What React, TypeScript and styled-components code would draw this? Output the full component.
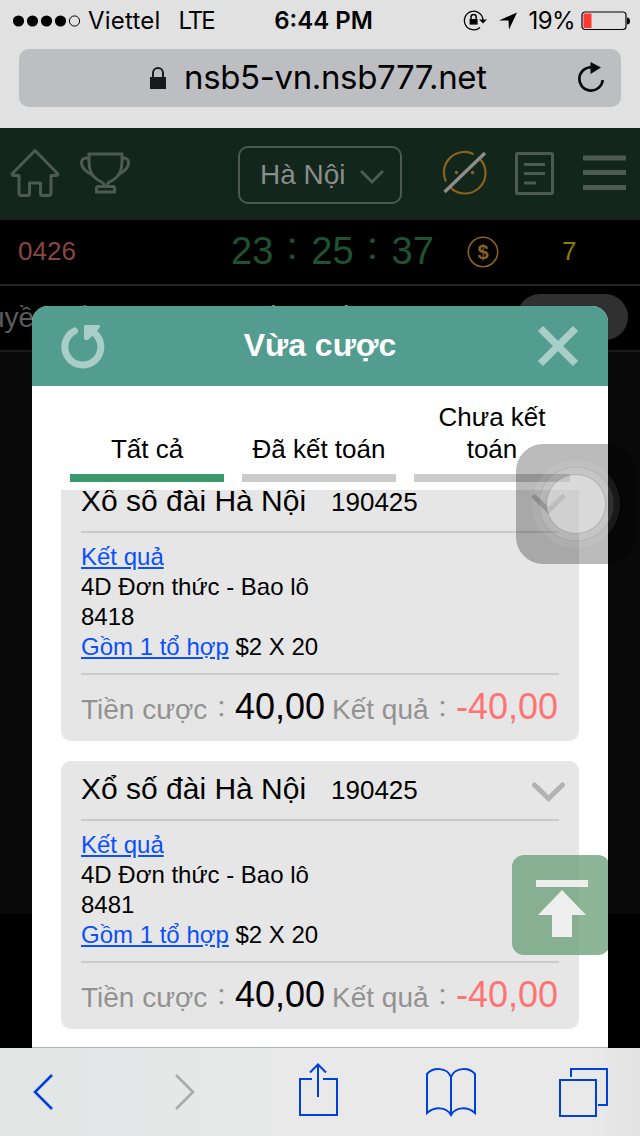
import React from 'react';
import styled, { createGlobalStyle } from 'styled-components';

const GlobalStyle = createGlobalStyle`
  * { box-sizing: border-box; }
  body { margin: 0; background: #000; font-family: "Liberation Sans", "Noto Sans CJK JP", sans-serif; }
`;

const Screen = styled.div`
  position: relative;
  width: 640px;
  height: 1136px;
  overflow: hidden;
  display: flex;
  flex-direction: column;
  background: #000;
`;

/* Browser chrome */
const Chrome = styled.header`
  height: 128px;
  flex: none;
  background: #e1e1e1;
  font-family: Inter, "Liberation Sans", sans-serif;
  color: #030303;
`;
const StatusBar = styled.div`
  height: 40px;
  display: grid;
  grid-template-columns: 1fr 100px 1fr;
  align-items: center;
  padding: 1px 10px 0 13px;
  font-size: 24px;
  line-height: 40px;
  white-space: nowrap;
`;
const Carrier = styled.div`
  display: flex;
  align-items: center;
`;
const Signal = styled.svg`
  margin-right: 7px;
`;
const StatusText = styled.span<{ $spacing: number; $gap?: number }>`
  letter-spacing: ${p => p.$spacing}px;
  margin-left: ${p => p.$gap || 0}px;
`;
const Clock = styled.div`
  font-weight: 600;
  padding-left: 4px;
  display: flex;
  justify-content: center;
`;
const StatusIcons = styled.div`
  display: flex;
  align-items: center;
  justify-content: flex-end;
`;
const LocationArrow = styled.svg`
  margin-left: 9px;
`;
const Battery = styled.svg`
  margin-left: 6px;
`;
const AddressBar = styled.div`
  width: 602px;
  height: 58px;
  margin: 9px 19px 0;
  padding: 0 16px 0 130px;
  border-radius: 10px;
  background: #bdbec2;
  display: flex;
  align-items: center;
`;
const Address = styled.span`
  margin: 0 0 2px 17px;
  flex: 1;
  font-size: 33px;
  line-height: 54px;
  letter-spacing: -0.37px;
  white-space: nowrap;
`;

/* Dimmed page */
const Page = styled.main`
  position: relative;
  height: 920px;
  flex: none;
  background: #000;
`;
const NavBar = styled.nav`
  height: 92px;
  border-bottom: 2px solid #1c1f1d;
  background: #12261b;
  display: flex;
  align-items: center;
  padding: 0 14px 0 10px;
`;
const TrophyIcon = styled.svg`
  margin-left: 20px;
`;
const RegionSelect = styled.div`
  width: 164px;
  height: 58px;
  margin: 4px 0 0 108px;
  padding: 0 16px 0 20px;
  border: 2px solid #4d5953;
  border-radius: 10px;
  display: flex;
  align-items: center;
  justify-content: space-between;
  color: #8c8c8c;
  font-size: 28px;
  white-space: nowrap;
`;
const SelectArrow = styled.svg`
  margin-top: 4px;
`;
const NavIcon = styled.svg<{ $gap: number }>`
  margin-left: ${p => p.$gap}px;
  flex: none;
`;
const InfoRow = styled.div`
  height: 66px;
  border-bottom: 2px solid #252525;
  display: flex;
  align-items: center;
  padding: 0 0 1px 18px;
  font-size: 26px;
  white-space: nowrap;
`;
const Issue = styled.span`
  width: 213px;
  color: #8a4444;
`;
const Timer = styled.span`
  width: 236px;
  padding-bottom: 2px;
  color: #1f5330;
  font-size: 38px;
  line-height: 58px;
`;
const Colon = styled.span`
  display: inline-block;
  width: 1.25em;
  font-size: 0.8em;
  line-height: 1;
  text-align: center;
  vertical-align: 0.1em;
`;
const Balance = styled.span`
  margin-left: 63px;
  color: #8f7d00;
`;
const Marquee = styled.div`
  height: 66px;
  border-bottom: 2px solid #1b1b1b;
  display: flex;
  align-items: center;
  padding-right: 12px;
  overflow: hidden;
  color: #5c5c5c;
  font-size: 28px;
  white-space: nowrap;
`;
const MarqueeText = styled.span<{ $bright?: boolean }>`
  flex: none;
  margin-left: ${p => (p.$bright ? 0 : -11)}px;
  width: ${p => (p.$bright ? 293 : 235)}px;
  color: ${p => (p.$bright ? '#8c8c8c' : '#5c5c5c')};
`;
const Pill = styled.span`
  width: 112px;
  height: 46px;
  margin-bottom: 3px;
  border-radius: 23px;
  background: #303030;
`;
const PageBody = styled.div`
  height: 562px;
  background: #090909;
`;

/* Dialog lies over the page */
const Dialog = styled.section`
  position: absolute;
  left: 32px;
  top: 178px;
  width: 576px;
  height: 742px;
  border-radius: 16px 16px 0 0;
  overflow: hidden;
  display: flex;
  flex-direction: column;
  background: #fff;
  border-bottom: 1px solid #b2b2b2;
`;
const DialogHeader = styled.div`
  height: 80px;
  flex: none;
  background: #539c90;
  display: flex;
  align-items: center;
  justify-content: space-between;
  padding: 0 29px 0 28px;
`;
const DialogTitle = styled.h1`
  margin: 0 3px 1px 0;
  color: #fff;
  font-size: 32px;
  font-weight: 700;
`;
const Tabs = styled.div`
  height: 96px;
  flex: none;
  display: grid;
  grid-template-columns: 154px 154px 156px;
  gap: 18px;
  padding: 0 38px;
`;
const Tab = styled.div<{ $active?: boolean }>`
  display: flex;
  align-items: flex-end;
  justify-content: center;
  text-align: center;
  padding: 0 0 9px;
  border-bottom: 8px solid ${p => (p.$active ? '#3a9a6b' : '#cbcbcb')};
  font-size: 26px;
  line-height: 32px;
  color: #000;
`;
const TabLabel = styled.span<{ $wrap?: boolean }>`
  white-space: ${p => (p.$wrap ? 'normal' : 'nowrap')};
  width: ${p => (p.$wrap ? '120px' : 'auto')};
`;
const BetList = styled.div`
  flex: 1;
  min-height: 0;
  margin-top: 8px;
  padding: 0 29px;
  overflow: hidden;
  display: flex;
  flex-direction: column;
  gap: 20px;
`;
const BetCard = styled.article<{ $scrolled?: boolean }>`
  height: 268px;
  flex: none;
  margin-top: ${p => (p.$scrolled ? '-17px' : '0')};
  padding: 0 20px;
  border-radius: 10px;
  background: #e6e6e6;
  color: #000;
`;
const BetHead = styled.div`
  height: 60px;
  border-bottom: 2px solid #cbcbcb;
  display: flex;
  align-items: baseline;
  line-height: 55px;
  font-size: 26px;
  white-space: nowrap;
`;
const GameName = styled.span`
  width: 250px;
  font-size: 30px;
`;
const Chevron = styled.svg`
  margin: 3px -7px 0 auto;
  align-self: center;
`;
const BetBody = styled.div`
  height: 142px;
  padding-top: 9px;
  border-bottom: 2px solid #cbcbcb;
  font-size: 24px;
  line-height: 30px;
  white-space: nowrap;
`;
const BetLink = styled.a`
  color: #0a50ff;
  text-decoration: underline;
`;
const BetFoot = styled.div`
  height: 66px;
  display: flex;
  align-items: baseline;
  line-height: 64px;
  color: #929292;
  white-space: nowrap;
`;
const FootLabel = styled.span<{ $width: number }>`
  width: ${p => p.$width}px;
  font-size: 28px;
`;
const Amount = styled.span<{ $loss?: boolean }>`
  font-size: 36px;
  width: ${p => (p.$loss ? 'auto' : '97px')};
  color: ${p => (p.$loss ? '#ff7373' : '#000')};
`;

/* Floating controls lie over the dialog */
const ToTop = styled.button`
  position: absolute;
  left: 480px;
  top: 549px;
  width: 98px;
  height: 100px;
  padding: 0;
  border: 0;
  border-radius: 12px;
  background: rgba(101, 155, 115, 0.74);
`;
const AssistShade = styled.div`
  position: absolute;
  left: 516px;
  top: 316px;
  width: 120px;
  height: 120px;
  border-radius: 27px;
  background: rgba(0, 0, 0, 0.27);
`;
const AssistButton = styled.svg`
  position: absolute;
  left: 531px;
  top: 331px;
`;

const Toolbar = styled.footer`
  height: 88px;
  flex: none;
  background: linear-gradient(90deg, #e1e5e3 0, #e4e7e7 110px, #e9e9e9 300px, #e9e9e9 590px, #e3e3e3 640px);
  display: flex;
  align-items: center;
`;
const ToolIcon = styled.svg<{ $gap: number; $lift?: number }>`
  flex: none;
  margin-left: ${p => p.$gap}px;
  margin-bottom: ${p => p.$lift || 0}px;
`;

type Bet = { number: string; scrolled?: boolean };
const bets: Bet[] = [{ number: '8418', scrolled: true }, { number: '8481' }];

function BetItem({ number, scrolled }: Bet) {
  return (
    <BetCard $scrolled={scrolled}>
      <BetHead>
        <GameName>Xổ số đài Hà Nội</GameName>
        <span>190425</span>
        <Chevron width="36" height="22" fill="none" stroke="#b2b2b2" strokeWidth="5" strokeLinecap="round">
          <path d="M4.500 4 18.500 17.500 32.500 4" />
        </Chevron>
      </BetHead>
      <BetBody>
        <div><BetLink>Kết quả</BetLink></div>
        <div>4D Đơn thức - Bao lô</div>
        <div>{number}</div>
        <div><BetLink>Gồm 1 tổ hợp</BetLink> $2 X 20</div>
      </BetBody>
      <BetFoot>
        <FootLabel $width={154}>Tiền cược<Colon>：</Colon></FootLabel>
        <Amount>40,00</Amount>
        <FootLabel $width={124}>Kết quả<Colon>：</Colon></FootLabel>
        <Amount $loss>-40,00</Amount>
      </BetFoot>
    </BetCard>
  );
}

export default function App() {
  return (
    <Screen>
      <GlobalStyle />
      <Chrome>
        <StatusBar>
          <Carrier>
            <Signal width="68" height="12">
              {[5.5, 19.5, 33.5, 47.5].map(x => <circle key={x} cx={x} cy="6" r="5.6" />)}
              <circle cx="61.5" cy="6" r="5.1" fill="none" stroke="#030303" />
            </Signal>
            <StatusText $spacing={0.2}>Viettel</StatusText>
            <StatusText $spacing={-2} $gap={18}>LTE</StatusText>
          </Carrier>
          <Clock>6:44 PM</Clock>
          <StatusIcons>
            <svg width="26" height="22" fill="none" stroke="#030303" strokeWidth="1.3">
              <path d="M17 17.400A9.300 9.300 0 1 1 20 10" />
              <path d="M16 9.500h8l-4 4z" fill="#030303" stroke="none" />
              <rect x="6.600" y="9" width="8" height="5.600" fill="#030303" stroke="none" />
              <path d="M8 9.500V7a2.600 2.600 0 0 1 5.200 0v2.500" strokeWidth="1.500" />
            </svg>
            <LocationArrow width="20" height="20">
              <path d="M1 9.500 19 1.500 11 18.500 10.500 9.500z" />
            </LocationArrow>
            <StatusText $spacing={-0.6} $gap={11}>19%</StatusText>
            <Battery width="49" height="20">
              <rect x="1" y="1" width="44" height="17.500" rx="3" fill="none" stroke="#030303" strokeWidth="1.200" />
              <rect x="2.500" y="2.500" width="8" height="14.500" fill="#ff3b30" />
              <path d="M46 6.500q3 0 3 3.500t-3 3.500z" />
            </Battery>
          </StatusIcons>
        </StatusBar>
        <AddressBar>
          <svg width="18" height="24" fill="none">
            <rect x="1" y="11" width="16" height="12" fill="#1a1a1a" />
            <path d="M4 12V7a5 5 0 0 1 10 0v5" stroke="#1a1a1a" strokeWidth="2" />
          </svg>
          <Address>nsb5-vn.nsb777.net</Address>
          <svg width="28" height="32" fill="none" stroke="#0a0a0a" strokeWidth="2.600">
            <path d="M14 5.200A11.700 11.700 0 1 0 25.700 18" />
            <path d="M13.500 0 24 5.500 13.500 12z" fill="#0a0a0a" stroke="none" />
          </svg>
        </AddressBar>
      </Chrome>

      <Page>
        <NavBar>
          <svg width="50" height="50" fill="none" stroke="#4d5953" strokeWidth="3" strokeLinejoin="round">
            <path d="M25 2.500 48 26 47 27.500h-6v17.500q0 2.500-2.500 2.500h-6q-2 0-2-2V35H19.500v10.500q0 2-2 2h-6Q9 47.500 9 45V27.500H3L2 26z" />
          </svg>
          <TrophyIcon width="50" height="42" fill="none" stroke="#4d5953" strokeWidth="3">
            <path d="M9 2h33v8c0 10-3.500 15-9 18-5 2.500-6.500 3.500-6 6.500h6q1.500 0 1.500 1.500v4H16.500v-4q0-1.500 1.500-1.500h6c.5-3-1-4-6-6.500C12.500 25 9 20 9 10z" />
            <path d="M9 6H6.500C2.500 6 1.200 8.500 1.600 12c.8 5 5.500 8.500 11 11M42 6h1.500C47.500 6 48.800 8.500 48.400 12c-.8 5-5.500 8.500-11 11" />
          </TrophyIcon>
          <RegionSelect>
            <span>Hà Nội</span>
            <SelectArrow width="24" height="16" fill="none" stroke="#4d5953" strokeWidth="3"><path d="M1 2 12 13 23 2" /></SelectArrow>
          </RegionSelect>
          <NavIcon $gap={40} width="46" height="46" fill="none">
            <g stroke="#8a641c" strokeWidth="2.200">
              <path d="M31.700 4.200A20.500 20.500 0 0 0 4 31.500" />
              <path d="M8 37A20.500 20.500 0 0 0 38 9" />
            </g>
            <circle cx="14.500" cy="22.500" r="1.700" fill="#8a641c" />
            <circle cx="30.500" cy="22.500" r="1.700" fill="#8a641c" />
            <path d="M2.500 42 43 3" stroke="#8c8c8c" strokeWidth="3.400" />
          </NavIcon>
          <NavIcon $gap={27} width="39" height="43" fill="none" stroke="#4d5953" strokeWidth="3">
            <rect x="1.500" y="1.500" width="36" height="40" rx="1" />
            <path d="M9 12.500h21M9 21.500h21M9 31h12" />
          </NavIcon>
          <NavIcon $gap={29} width="43" height="36" stroke="#4d5953" strokeWidth="5">
            <path d="M0 3h43M0 17.500h43M0 32.500h43" />
          </NavIcon>
        </NavBar>
        <InfoRow>
          <Issue>0426</Issue>
          <Timer>23<Colon>：</Colon>25<Colon>：</Colon>37</Timer>
          <svg width="32" height="32">
            <circle cx="16" cy="16" r="14.700" fill="none" stroke="#8a641c" strokeWidth="1.500" />
            <text x="16" y="22.500" textAnchor="middle" fill="#8a641c" fontSize="20" fontWeight="700">$</text>
          </svg>
          <Balance>7</Balance>
        </InfoRow>
        <Marquee>
          <MarqueeText>uyền số</MarqueeText>
          <MarqueeText $bright>truyền thống</MarqueeText>
          <Pill />
        </Marquee>
        <PageBody />

        <Dialog>
          <DialogHeader>
            <svg width="46" height="46" fill="none" stroke="#a9cec8" strokeWidth="7">
              <path d="M14.500 8A18 18 0 1 0 34 9.800" strokeLinecap="round" />
              <path d="M25.500 2h12.500q3 0 1.500 2.500L36.500 8.500l-8 8q-4.500 2-4.500-2V3.500q0-1.500 1.500-1.500z" fill="#a9cec8" stroke="none" />
            </svg>
            <DialogTitle>Vừa cược</DialogTitle>
            <svg width="42" height="42" stroke="#a9cec8" strokeWidth="7.400"><path d="M3.500 3.500 38.500 38.500M38.500 3.500 3.500 38.500" /></svg>
          </DialogHeader>
          <Tabs>
            <Tab $active><TabLabel>Tất cả</TabLabel></Tab>
            <Tab><TabLabel>Đã kết toán</TabLabel></Tab>
            <Tab><TabLabel $wrap>Chưa kết toán</TabLabel></Tab>
          </Tabs>
          <BetList>
            {bets.map(bet => <BetItem key={bet.number} {...bet} />)}
          </BetList>
          <ToTop>
            <svg width="98" height="100" fill="#eee">
              <path d="M24 25h52v7H24zM50 35 74 60H60v22H40V60H26z" />
            </svg>
          </ToTop>
        </Dialog>

        <AssistShade />
        <AssistButton width="90" height="90">
          <circle cx="45" cy="45" r="44" fill="#fff" fillOpacity="0.08" />
          <circle cx="45" cy="45" r="37" fill="#fff" fillOpacity="0.1" stroke="#777" strokeOpacity="0.2" />
          <circle cx="45" cy="45" r="29.500" fill="#fff" fillOpacity="0.36" stroke="#777" strokeOpacity="0.35" />
        </AssistButton>
      </Page>

      <Toolbar>
        <ToolIcon $gap={33} width="22" height="38" fill="none" stroke="#0040dd" strokeWidth="2.600">
          <path d="M19 2 2 19 19 36" />
        </ToolIcon>
        <ToolIcon $gap={118} width="22" height="38" fill="none" stroke="#aaa" strokeWidth="2.600">
          <path d="M3 2 20 19 3 36" />
        </ToolIcon>
        <ToolIcon $gap={103} $lift={4} width="40" height="56" fill="none" stroke="#0040dd" strokeWidth="2">
          <path d="M14 17H2v36h37V17H25M20 35V3M12 10.500l8-8 8 8" />
        </ToolIcon>
        <ToolIcon $gap={87} width="52" height="50" fill="none" stroke="#0040dd" strokeWidth="2">
          <path d="M26 48V10C22 0 8 0 2 7v39C9 40 21 39 26 48 31 39 43 40 50 46V7C44 0 30 0 26 10" />
        </ToolIcon>
        <ToolIcon $gap={82} width="50" height="50" fill="none" stroke="#0040dd" strokeWidth="2">
          <path d="M1 13h36v36H1zM12 10V2h36v36h-9" />
        </ToolIcon>
      </Toolbar>
    </Screen>
  );
}
